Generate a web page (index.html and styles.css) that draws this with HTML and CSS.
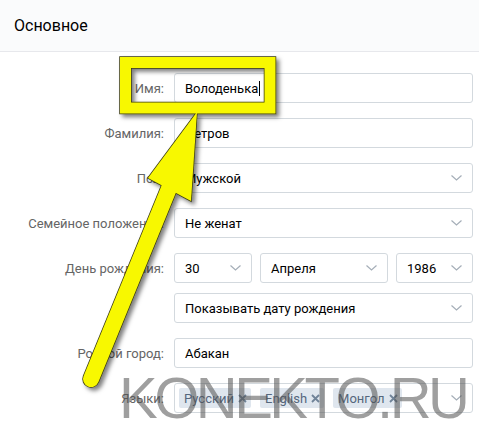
FILE: index.html
```html
<!DOCTYPE html>
<html lang="ru">
<head>
  <meta charset="UTF-8">
  <title>Основное</title>
  <link rel="stylesheet" href="styles.css">
</head>
<body>
  <div class="page">
    <div class="head">Основное</div>

    <div class="form">
      <div class="row">
        <div class="label">Имя:</div>
        <div class="field">Володенька<span class="caret"></span></div>
      </div>
      <div class="row">
        <div class="label">Фамилия:</div>
        <div class="field">Петров</div>
      </div>
      <div class="row">
        <div class="label">Пол:</div>
        <div class="field select">Мужской
          <svg class="chev" width="11" height="6" viewBox="0 0 11 6"><polyline points="0.5,0.5 5.5,5 10.5,0.5"/></svg>
        </div>
      </div>
      <div class="row">
        <div class="label">Семейное положение:</div>
        <div class="field select">Не женат
          <svg class="chev" width="11" height="6" viewBox="0 0 11 6"><polyline points="0.5,0.5 5.5,5 10.5,0.5"/></svg>
        </div>
      </div>
      <div class="row">
        <div class="label">День рождения:</div>
        <div class="date">
          <div class="field select day">30
            <svg class="chev" width="11" height="6" viewBox="0 0 11 6"><polyline points="0.5,0.5 5.5,5 10.5,0.5"/></svg>
          </div>
          <div class="field select month">Апреля
            <svg class="chev" width="11" height="6" viewBox="0 0 11 6"><polyline points="0.5,0.5 5.5,5 10.5,0.5"/></svg>
          </div>
          <div class="field select year">1986
            <svg class="chev" width="11" height="6" viewBox="0 0 11 6"><polyline points="0.5,0.5 5.5,5 10.5,0.5"/></svg>
          </div>
        </div>
      </div>
      <div class="row tight">
        <div class="label"></div>
        <div class="field select">Показывать дату рождения
          <svg class="chev" width="11" height="6" viewBox="0 0 11 6"><polyline points="0.5,0.5 5.5,5 10.5,0.5"/></svg>
        </div>
      </div>
      <div class="row">
        <div class="label">Родной город:</div>
        <div class="field">Абакан</div>
      </div>
      <div class="row">
        <div class="label">Языки:</div>
        <div class="field select tags">
          <span class="tag">Русский <svg class="x" width="9" height="9" viewBox="0 0 9 9"><path d="M1 1L8 8M8 1L1 8"/></svg></span>
          <span class="tag">English <svg class="x" width="9" height="9" viewBox="0 0 9 9"><path d="M1 1L8 8M8 1L1 8"/></svg></span>
          <span class="tag">Монгол <svg class="x" width="9" height="9" viewBox="0 0 9 9"><path d="M1 1L8 8M8 1L1 8"/></svg></span>
          <svg class="chev" width="11" height="6" viewBox="0 0 11 6"><polyline points="0.5,0.5 5.5,5 10.5,0.5"/></svg>
        </div>
      </div>
    </div>

    <!-- выделение и стрелка поверх формы -->
    <svg class="overlay" width="479" height="428" viewBox="0 0 479 428">
      <defs>
        <filter id="shadow" x="-20%" y="-20%" width="140%" height="140%">
          <feDropShadow dx="3" dy="3" stdDeviation="2" flood-color="#000" flood-opacity="0.5"/>
        </filter>
      </defs>
      <g filter="url(#shadow)">
        <rect x="125.5" y="62.5" width="144.5" height="45.5" fill="none" stroke="#3a3a10" stroke-width="12.5"/>
        <line x1="170" y1="186" x2="91" y2="379" stroke="#3a3a10" stroke-width="17.5" stroke-linecap="round"/>
        <polygon points="197,112 148,178 191,201" fill="#3a3a10" stroke="#3a3a10" stroke-width="1.5"/>
        <rect x="125.5" y="62.5" width="144.5" height="45.5" fill="none" stroke="#f8f800" stroke-width="11"/>
        <line x1="170" y1="186" x2="91" y2="379" stroke="#f8f800" stroke-width="16" stroke-linecap="round"/>
        <polygon points="197,112 148,178 191,201" fill="#f8f800"/>
      </g>
    </svg>

    <div class="watermark">KONEKTO.RU</div>
  </div>
</body>
</html>
```

FILE: styles.css
```css
body {
  margin: 0;
  font-family: Roboto, "Open Sans", sans-serif;
  font-size: 13px;
  background: #fff;
}

.page {
  position: relative;
  width: 479px;
  height: 428px;
  overflow: hidden;
}

.head {
  height: 51px;
  background: #fafbfc;
  border-bottom: 1px solid #e7e8ec;
  padding-left: 14px;
  display: flex;
  align-items: center;
  font-size: 16px;
  color: #000;
}

.form {
  padding-top: 21px;
  display: flex;
  flex-direction: column;
  gap: 15px;
}

.row {
  display: grid;
  grid-template-columns: 164px 299px;
  column-gap: 10px;
  align-items: center;
}

.row.tight {
  margin-top: -5px;
}

.label {
  text-align: right;
  color: #656565;
}

.field {
  height: 30px;
  box-sizing: border-box;
  border: 1px solid #d3d9de;
  border-radius: 3px;
  padding: 0 10px 0 10px;
  display: flex;
  align-items: center;
  color: #000;
  background: #fff;
}

.caret {
  display: inline-block;
  width: 1px;
  height: 15px;
  background: #000;
  margin-left: 1px;
}

.chev {
  margin-left: auto;
  flex: none;
}

.chev polyline {
  fill: none;
  stroke: #a5aeb8;
  stroke-width: 1.2;
}

.date {
  display: flex;
  gap: 8px;
}

.day { width: 78px; }
.month { width: 128px; }
.year { width: 77px; }

.tags {
  padding-left: 4px;
  gap: 9px;
}

.tag {
  height: 20px;
  display: flex;
  align-items: center;
  gap: 4px;
  padding: 0 4px 0 5px;
  background: #dfe6ee;
  color: #55677d;
  border-radius: 2px;
}

.tag .x path {
  fill: none;
  stroke: #6f8398;
  stroke-width: 1.8;
}

.overlay {
  position: absolute;
  top: 0;
  left: 0;
  pointer-events: none;
}

.watermark {
  position: absolute;
  left: 119px;
  top: 369px;
  font-family: "Liberation Sans", Arial, sans-serif;
  font-size: 58px;
  line-height: 58px;
  letter-spacing: -3.5px;
  color: rgba(80, 80, 80, 0.55);
  white-space: nowrap;
  pointer-events: none;
}
```
